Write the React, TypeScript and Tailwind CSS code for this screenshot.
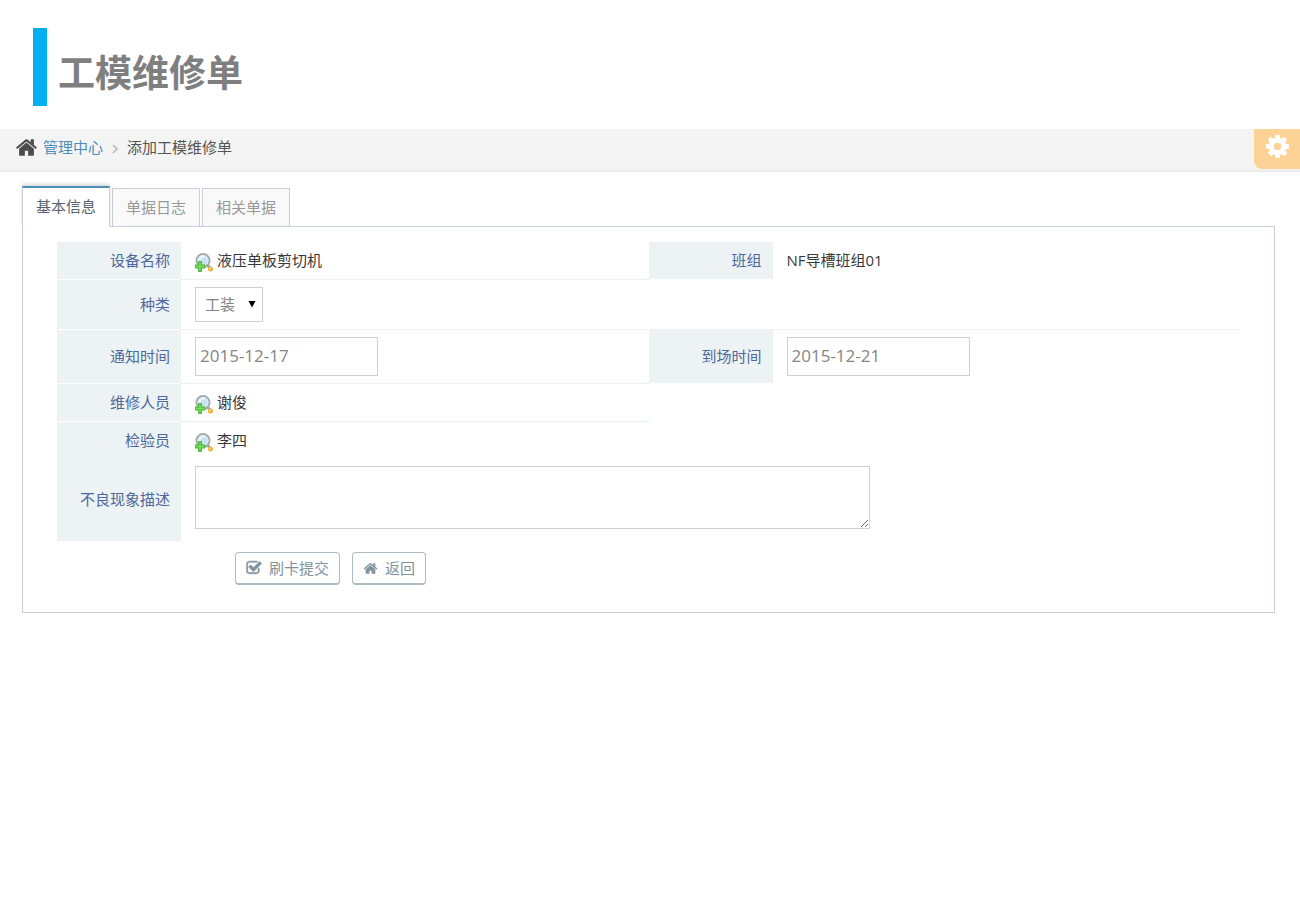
import { useState } from 'react';
import type { ReactNode } from 'react';
import clsx from 'clsx';

const TABS = ['基本信息', '单据日志', '相关单据'];

type IconProps = {
  className?: string;
};

function HomeIcon({ className }: IconProps) {
  return (
    <svg viewBox="0 0 1792 1792" fill="currentColor" className={className} aria-hidden="true">
      <path d="M1472 992v480q0 26-19 45t-45 19h-384v-384h-256v384h-384q-26 0-45-19t-19-45v-480q0-1 .5-3t.5-3l575-474 575 474q1 2 1 6zm223-69l-62 74q-8 9-21 11h-3q-13 0-21-7l-692-577-692 577q-12 8-24 7-13-2-21-11l-62-74q-8-10-7-23.500t11-21.500l719-599q32-26 76-26t76 26l244 204v-195q0-14 9-23t23-9h192q14 0 23 9t9 23v408l219 182q10 8 11 21.500t-7 23.500z" />
    </svg>
  );
}

function CogIcon({ className }: IconProps) {
  return (
    <svg viewBox="0 0 1792 1792" fill="currentColor" className={className} aria-hidden="true">
      <path d="M1152 896q0-106-75-181t-181-75-181 75-75 181 75 181 181 75 181-75 75-181zm512-109v222q0 12-8 23t-20 13l-185 28q-19 54-39 91 35 50 107 138 10 12 10 25t-9 23q-27 37-99 108t-94 71q-12 0-26-9l-138-108q-44 23-91 38-16 136-29 186-7 28-36 28h-222q-14 0-24.500-8.500t-11.500-21.500l-28-184q-49-16-90-37l-141 107q-10 9-25 9-14 0-25-11-126-114-165-168-7-10-7-23 0-12 8-23 15-21 51-66.500t54-70.500q-27-50-41-99l-183-27q-13-2-21-12.500t-8-23.500v-222q0-12 8-23t19-13l186-28q14-46 39-92-40-57-107-138-10-12-10-24 0-10 9-23 26-36 98.500-107.500t94.500-71.500q13 0 26 10l138 107q44-23 91-38 16-136 29-186 7-28 36-28h222q14 0 24.500 8.500t11.500 21.500l28 184q49 16 90 37l142-107q9-9 24-9 13 0 25 10 129 119 165 170 7 8 7 22 0 12-8 23-15 21-51 66.500t-54 70.500q26 50 41 98l183 28q13 2 21 12.500t8 23.500z" />
    </svg>
  );
}

function CheckSquareIcon({ className }: IconProps) {
  return (
    <svg
      viewBox="0 0 1792 1792"
      fill="currentColor"
      stroke="currentColor"
      strokeWidth="70"
      className={className}
      aria-hidden="true"
    >
      <path d="M1472 930v318q0 119-84.500 203.500t-203.500 84.500h-832q-119 0-203.500-84.500t-84.500-203.500v-832q0-119 84.500-203.500t203.500-84.500h832q63 0 117 25 15 7 18 23 3 17-9 29l-49 49q-10 10-23 10-3 0-9-2-23-6-45-6h-832q-66 0-113 47t-47 113v832q0 66 47 113t113 47h832q66 0 113-47t47-113v-254q0-13 9-22l64-64q10-10 23-10 6 0 12 3 20 8 20 29zm231-489l-814 814q-24 24-57 24t-57-24l-430-430q-24-24-24-57t24-57l110-110q24-24 57-24t57 24l263 263 647-647q24-24 57-24t57 24l110 110q24 24 24 57t-24 57z" />
    </svg>
  );
}

function LookupIcon({ className }: IconProps) {
  return (
    <svg viewBox="0 0 18 19" className={className} aria-hidden="true">
      <circle cx="8" cy="7.500" r="6.500" fill="#c5e2f2" stroke="#a3a9ad" strokeWidth="2" />
      <circle cx="8" cy="7.500" r="5" fill="none" stroke="#eef3f5" strokeWidth="1" />
      <path d="M4.500 8a4 4 0 0 1 5-4" fill="none" stroke="#f3fbff" strokeWidth="1.500" />
      <path d="M12 11.500l3 3.500" stroke="#a3a7a8" strokeWidth="3" />
      <circle cx="15.500" cy="16" r="2.500" fill="#efac32" />
      <circle cx="15" cy="15.500" r="1.200" fill="#ffd777" />
      <path
        d="M3.500 8.500h3v3.500h3.500v3h-3.500v3.500h-3v-3.500h-3.500v-3h3.500z"
        fill="#5fcf45"
        stroke="#4fb83a"
        strokeWidth="1"
      />
      <path d="M5 9.500v8M1 13.500h8" stroke="#7fdc68" strokeWidth="1" />
    </svg>
  );
}

type FieldProps = {
  label: string;
  htmlFor?: string;
  wide?: boolean;
  noLine?: boolean;
  joined?: boolean;
  children: ReactNode;
};

function Field({ label, htmlFor, wide, noLine, joined, children }: FieldProps) {
  const labelClass = clsx(
    'flex w-[124px] shrink-0 items-center justify-end border-b bg-[#edf3f5] pr-[11px] pb-[2px] text-[#4e689b]',
    joined ? 'border-[#edf3f5]' : 'border-white'
  );

  return (
    <div className={clsx('flex', wide && 'col-span-2')}>
      {htmlFor ? (
        <label htmlFor={htmlFor} className={labelClass}>
          {label}
        </label>
      ) : (
        <span className={labelClass}>{label}</span>
      )}
      <div
        className={clsx(
          'flex min-w-0 flex-1 items-center border-b border-dotted pl-[14px]',
          noLine || joined ? 'border-transparent' : 'border-[#dce6ec]'
        )}
      >
        {children}
      </div>
    </div>
  );
}

function LookupValue({ name, title }: { name: string; title: string }) {
  return (
    <>
      <button type="button" aria-label={title} className="mt-1 mr-1 cursor-pointer">
        <LookupIcon className="h-[19px] w-[18px]" />
      </button>
      <span className="pb-[2px]">{name}</span>
    </>
  );
}

export default function App() {
  const [activeTab, setActiveTab] = useState(TABS[0]);
  const [kind, setKind] = useState('工装');
  const [noticeDate, setNoticeDate] = useState('2015-12-17');
  const [arrivalDate, setArrivalDate] = useState('2015-12-21');
  const [description, setDescription] = useState('');

  const inputClass =
    'h-[39px] w-[183px] border border-[#d0d0d0] bg-white px-1 pb-[2px] text-[17px] text-[#858585] outline-none';
  const buttonClass =
    'flex h-[33px] cursor-pointer items-center gap-[7px] rounded border border-b-2 border-[#abbac3] bg-white px-[10px] text-[#80929c]';

  return (
    <div className="min-h-screen bg-white font-['Open_Sans','Noto_Sans_CJK_SC',sans-serif] text-[15px] leading-5 text-[#393939]">
      <header className="flex items-center pt-7 pb-[23px] pl-[33px]">
        <div className="h-[78px] w-[14px] bg-[#00b0f0]" />
        <h1 className="pt-3 pl-[11px] text-[37px] leading-10 font-bold text-[#7f7f7f]">工模维修单</h1>
      </header>

      {/* Breadcrumb */}
      <div className="flex h-[43px] items-start justify-between border-b-2 border-[#ececec] bg-[#f4f4f4]">
        <nav className="flex h-9 items-center pl-[15px]">
          <HomeIcon className="mr-[5px] size-[23px] text-[#4c4c4c]" />
          <a href="#" className="text-[#4c8fbd]">
            管理中心
          </a>
          <svg viewBox="0 0 6 10" className="mx-[9px] mt-1 h-[10px] w-[6px]" aria-hidden="true">
            <path d="M1 1l4 4-4 4" fill="none" stroke="#b2b6bf" strokeWidth="1.500" />
          </svg>
          <span className="text-[#555555]">添加工模维修单</span>
        </nav>
        <button
          type="button"
          aria-label="设置"
          className="flex h-10 w-[46px] cursor-pointer justify-center rounded-bl-lg bg-[#fcd297] pt-1 text-white"
        >
          <CogIcon className="size-[27px]" />
        </button>
      </div>

      <main className="pt-[14px] pr-[25px] pl-[22px]">
        {/* Tabs sit on the top border of the panel */}
        <div role="tablist" className="-mb-px flex items-end gap-[2px]">
          {TABS.map((tab) => (
            <button
              key={tab}
              type="button"
              role="tab"
              aria-selected={activeTab === tab}
              onClick={() => setActiveTab(tab)}
              className={clsx(
                'cursor-pointer border px-[13px] pb-[2px]',
                activeTab === tab
                  ? 'relative h-[41px] border-t-2 border-[#c5d0dc] border-t-[#4c8fbd] border-b-white bg-white text-[#576373] shadow-[0_-2px_3px_0_rgba(0,0,0,0.15)]'
                  : 'h-[39px] border-[#c5d0dc] bg-[#f9f9f9] text-[#999999]'
              )}
            >
              {tab}
            </button>
          ))}
        </div>

        <form
          onSubmit={(e) => e.preventDefault()}
          className="border border-[#c5d0dc] px-[34px] pt-[15px] pb-[27px]"
        >
          <div className="grid grid-cols-2 grid-rows-[38px_50px_54px_38px_38px_81px]">
            <Field label="设备名称">
              <LookupValue name="液压单板剪切机" title="选择设备" />
            </Field>
            <Field label="班组" noLine>
              <span className="pb-[2px]">NF导槽班组01</span>
            </Field>

            <Field label="种类" htmlFor="kind" wide>
              <div className="relative">
                <select
                  id="kind"
                  value={kind}
                  onChange={(e) => setKind(e.target.value)}
                  className="block h-[35px] w-[68px] appearance-none border border-[#d0d0d0] bg-white pb-[2px] pl-[9px] text-[#858585] outline-none"
                >
                  <option value="工装">工装</option>
                  <option value="模具">模具</option>
                </select>
                <svg
                  viewBox="0 0 8 8"
                  className="pointer-events-none absolute top-[13px] right-[7px] size-2"
                  aria-hidden="true"
                >
                  <path d="M.5 1h7l-3.500 6.500z" fill="#000" />
                </svg>
              </div>
            </Field>

            <Field label="通知时间" htmlFor="noticeDate">
              <input
                id="noticeDate"
                type="text"
                value={noticeDate}
                onChange={(e) => setNoticeDate(e.target.value)}
                className={inputClass}
              />
            </Field>
            <Field label="到场时间" htmlFor="arrivalDate" noLine>
              <input
                id="arrivalDate"
                type="text"
                value={arrivalDate}
                onChange={(e) => setArrivalDate(e.target.value)}
                className={inputClass}
              />
            </Field>

            <Field label="维修人员">
              <LookupValue name="谢俊" title="选择维修人员" />
            </Field>
            <div />

            <Field label="检验员" joined>
              <LookupValue name="李四" title="选择检验员" />
            </Field>
            <div />

            <Field label="不良现象描述" htmlFor="description" wide joined>
              <textarea
                id="description"
                value={description}
                onChange={(e) => setDescription(e.target.value)}
                className="mb-[6px] h-[63px] w-[675px] max-w-full border border-[#d0d0d0] bg-white p-1 outline-none"
              />
            </Field>
          </div>

          <div className="flex gap-3 pt-[11px] pl-[178px]">
            <button type="submit" className={buttonClass}>
              <CheckSquareIcon className="size-[16px]" />
              刷卡提交
            </button>
            <button type="button" className={buttonClass}>
              <HomeIcon className="size-[15px]" />
              返回
            </button>
          </div>
        </form>
      </main>
    </div>
  );
}
